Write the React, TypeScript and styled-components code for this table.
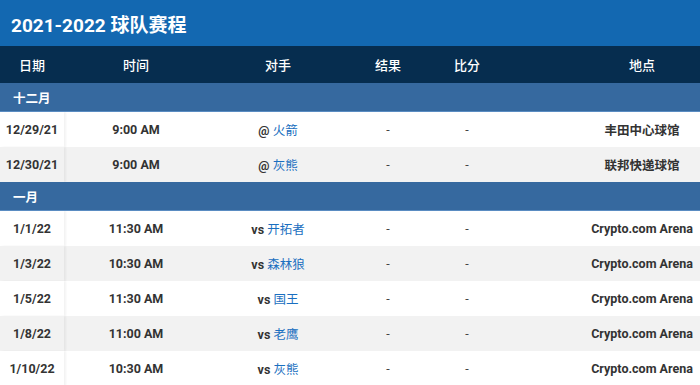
import React from "react";
import styled, { createGlobalStyle } from "styled-components";

const Global = createGlobalStyle`
  body { margin:0; background:#fff; font-family: Roboto, "Noto Sans CJK SC", sans-serif; }
`;

const Page = styled.div`
  width:700px; overflow:hidden;
`;

const TitleBar = styled.h1`
  margin:0; height:46px; background:#1368b1; color:#fff;
  display:flex; align-items:center; padding:0 11px;
  font-size:19px; font-weight:700;
`;

const Scroller = styled.div`
  width:700px; overflow:hidden;
`;

const Table = styled.table`
  width:778px; table-layout:fixed; border-collapse:collapse;
  font-size:12.5px; color:#333;
`;

const HeadCell = styled.th<{ $first?: boolean }>`
  height:37px; padding:0; background:#062d4f; color:#fff;
  font-weight:500; font-size:13px; text-align:center;
  ${p => p.$first && "box-shadow: 2px 0 3px rgba(0,0,0,0.18);"}
`;

const MonthRow = styled.tr`
  background:#36699f; border-bottom:1px solid #5a8cc2;
`;

const MonthCell = styled.td`
  height:28px; padding:0 0 0 13px; color:#fff; font-weight:700; font-size:12.5px;
`;

const GameRow = styled.tr<{ $alt?: boolean }>`
  background:${p => (p.$alt ? "#f2f2f2" : "#fff")};
`;

const Cell = styled.td<{ $first?: boolean }>`
  height:35px; padding:0; text-align:center; font-weight:700; white-space:nowrap;
  ${p => p.$first && "box-shadow: 2px 0 2px rgba(0,0,0,0.05);"}
`;

const Dash = styled.span`
  font-weight:400; color:#444;
`;

const Team = styled.a`
  color:#1a6fc0; font-weight:400; text-decoration:none;
`;

const Venue = styled.span`
  font-weight:700; color:#333;
`;

type Game = { date: string; time: string; pre: string; team: string; venue: string };

const months: { name: string; games: Game[] }[] = [
  {
    name: "十二月",
    games: [
      { date: "12/29/21", time: "9:00 AM", pre: "@", team: "火箭", venue: "丰田中心球馆" },
      { date: "12/30/21", time: "9:00 AM", pre: "@", team: "灰熊", venue: "联邦快递球馆" },
    ],
  },
  {
    name: "一月",
    games: [
      { date: "1/1/22", time: "11:30 AM", pre: "vs", team: "开拓者", venue: "Crypto.com Arena" },
      { date: "1/3/22", time: "10:30 AM", pre: "vs", team: "森林狼", venue: "Crypto.com Arena" },
      { date: "1/5/22", time: "11:30 AM", pre: "vs", team: "国王", venue: "Crypto.com Arena" },
      { date: "1/8/22", time: "11:00 AM", pre: "vs", team: "老鹰", venue: "Crypto.com Arena" },
      { date: "1/10/22", time: "10:30 AM", pre: "vs", team: "灰熊", venue: "Crypto.com Arena" },
    ],
  },
];

const cols = [64, 144, 140, 80, 78, 272];
const heads = ["日期", "时间", "对手", "结果", "比分", "地点"];

export default function App() {
  return (
    <Page>
      <Global />
      <TitleBar>2021-2022 球队赛程</TitleBar>
      <Scroller>
        <Table>
          <colgroup>
            {cols.map((w, i) => <col key={i} style={{ width: w }} />)}
          </colgroup>
          <thead>
            <tr>
              {heads.map((h, i) => <HeadCell key={h} $first={i === 0}>{h}</HeadCell>)}
            </tr>
          </thead>
          <tbody>
            {months.map(m => (
              <React.Fragment key={m.name}>
                <MonthRow><MonthCell colSpan={6}>{m.name}</MonthCell></MonthRow>
                {m.games.map((g, i) => (
                  <GameRow key={g.date} $alt={i % 2 === 1}>
                    <Cell $first>{g.date}</Cell>
                    <Cell>{g.time}</Cell>
                    <Cell>{g.pre} <Team href="#">{g.team}</Team></Cell>
                    <Cell><Dash>-</Dash></Cell>
                    <Cell><Dash>-</Dash></Cell>
                    <Cell><Venue>{g.venue}</Venue></Cell>
                  </GameRow>
                ))}
              </React.Fragment>
            ))}
          </tbody>
        </Table>
      </Scroller>
    </Page>
  );
}
